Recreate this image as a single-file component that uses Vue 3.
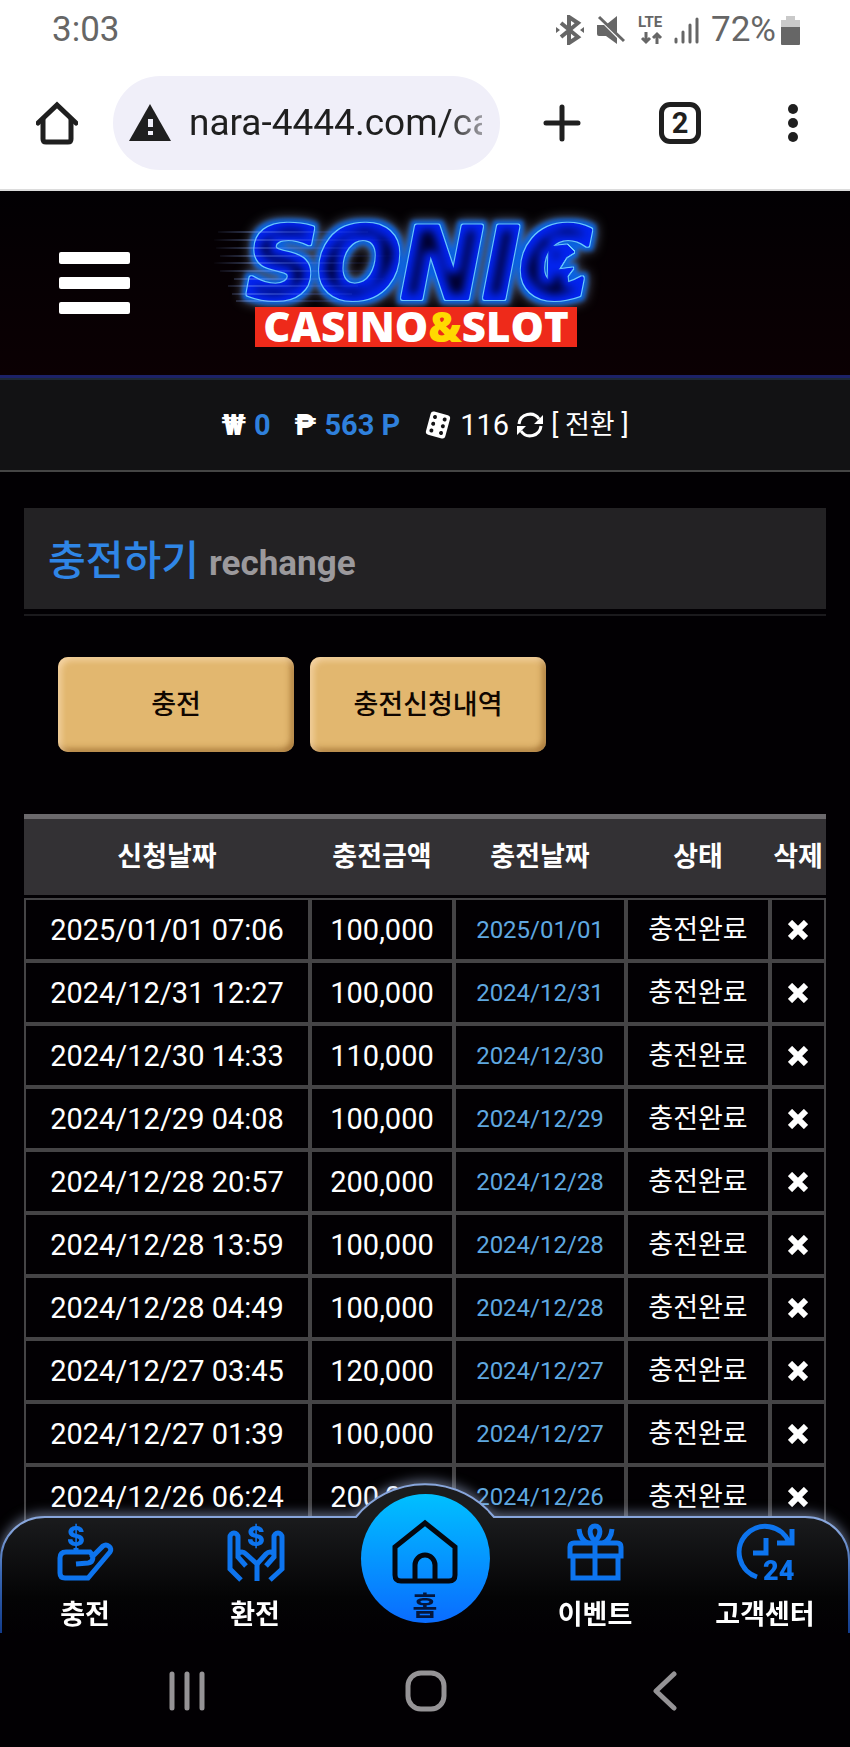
<script setup>
import { ref } from 'vue'

const address = ref('nara-4444.com/cash')
const activeTab = ref('history')

const tabs = [
  { id: 'charge', label: '충전' },
  { id: 'history', label: '충전신청내역' },
]

const rows = ref([
  { id: 1, requested: '2025/01/01 07:06', amount: 100000, charged: '2025/01/01' },
  { id: 2, requested: '2024/12/31 12:27', amount: 100000, charged: '2024/12/31' },
  { id: 3, requested: '2024/12/30 14:33', amount: 110000, charged: '2024/12/30' },
  { id: 4, requested: '2024/12/29 04:08', amount: 100000, charged: '2024/12/29' },
  { id: 5, requested: '2024/12/28 20:57', amount: 200000, charged: '2024/12/28' },
  { id: 6, requested: '2024/12/28 13:59', amount: 100000, charged: '2024/12/28' },
  { id: 7, requested: '2024/12/28 04:49', amount: 100000, charged: '2024/12/28' },
  { id: 8, requested: '2024/12/27 03:45', amount: 120000, charged: '2024/12/27' },
  { id: 9, requested: '2024/12/27 01:39', amount: 100000, charged: '2024/12/27' },
  { id: 10, requested: '2024/12/26 06:24', amount: 200000, charged: '2024/12/26' },
])

function formatAmount(n) {
  return n.toLocaleString('en-US')
}

function removeRow(id) {
  rows.value = rows.value.filter((r) => r.id !== id)
}
</script>

<template>
  <div class="screen">
    <div class="status-bar">
      <span>3:03</span>
      <div class="status-icons">
        <svg width="28" height="30" viewBox="0 0 28 30" fill="none" stroke="#666" stroke-width="4">
          <path d="M5 8l17 14-9 6V2l9 6L5 22" />
          <path d="M0 12l4 3-4 3zM28 12l-4 3 4 3z" fill="#666" stroke="none" />
        </svg>
        <svg class="mute" width="28" height="30" viewBox="0 0 28 30" fill="#666">
          <path d="M0 10h7l13 13v6L9 21H2q-2 0-2-2zM10 9l10-8v17z" />
          <path d="M2 2l25 24" stroke="#666" stroke-width="3" />
        </svg>
        <svg class="lte" width="28" height="30" viewBox="0 0 28 30">
          <text x="0" y="12" font-size="15" font-weight="700" fill="#666">LTE</text>
          <path d="M8 17v10M4 23l4 4 4-4M19 29V19M15 23l4-4 4 4" fill="none" stroke="#666" stroke-width="3" />
        </svg>
        <svg class="signal" width="26" height="30" viewBox="0 0 26 30" stroke="#666" stroke-width="3" stroke-linecap="round">
          <path d="M2 24v3M9 17v10M16 10v17M23 4v23" />
        </svg>
        <span class="battery-text">72%</span>
        <svg class="battery" width="19" height="29" viewBox="0 0 19 29">
          <path d="M5 0h9v4h5v8H0V4h5z" fill="#c9c9c9" />
          <path d="M0 11h19v17q0 1-1 1H1q-1 0-1-1z" fill="#666" />
        </svg>
      </div>
    </div>

    <div class="browser-bar">
      <button type="button" aria-label="홈페이지">
        <svg width="42" height="44" viewBox="0 0 42 44" fill="none" stroke="#1f1f1f" stroke-width="5">
          <path d="M2 22L21 4l19 18" stroke-linecap="round" />
          <path d="M7 18v20q0 3 3 3h22q3 0 3-3V18" />
        </svg>
      </button>
      <label class="address">
        <svg width="42" height="37" viewBox="0 0 42 37">
          <path d="M21 0l21 37H0z" fill="#1f1f1f" />
          <path d="M19 15h5v8h-5zM19 27h5v4h-5z" fill="#f0eff9" />
        </svg>
        <input v-model="address" type="text" aria-label="주소" />
      </label>
      <button class="new-tab" type="button" aria-label="새 탭">
        <svg width="38" height="38" viewBox="0 0 38 38" stroke="#1f1f1f" stroke-width="5" stroke-linecap="round">
          <path d="M19 3v32M3 19h32" />
        </svg>
      </button>
      <button class="tab-count" type="button">2</button>
      <button class="more" type="button" aria-label="메뉴 더보기">
        <svg width="10" height="38" viewBox="0 0 10 38" fill="#1f1f1f">
          <circle cx="5" cy="5" r="5" />
          <circle cx="5" cy="19" r="5" />
          <circle cx="5" cy="33" r="5" />
        </svg>
      </button>
    </div>

    <header class="site-header">
      <button class="hamburger" type="button" aria-label="메뉴">
        <span></span>
        <span></span>
        <span></span>
      </button>
      <svg class="logo" width="430" height="166" viewBox="0 0 430 166">
        <defs>
          <filter id="neon" x="-10%" y="-30%" width="120%" height="160%" color-interpolation-filters="sRGB">
            <feMorphology in="SourceAlpha" operator="dilate" radius="4" result="wide" />
            <feGaussianBlur in="wide" stdDeviation="6" result="haze" />
            <feFlood flood-color="#8296b8" flood-opacity="0.75" />
            <feComposite in2="haze" operator="in" result="hazeColor" />
            <feMorphology in="SourceAlpha" operator="dilate" radius="4" result="mid" />
            <feGaussianBlur in="mid" stdDeviation="2" result="midBlur" />
            <feFlood flood-color="#0a62e0" />
            <feComposite in2="midBlur" operator="in" result="halo" />
            <feMorphology in="SourceAlpha" operator="dilate" radius="1" result="edge" />
            <feFlood flood-color="#6ccbff" />
            <feComposite in2="edge" operator="in" result="edgeColor" />
            <feMorphology in="SourceAlpha" operator="erode" radius="6" result="thin" />
            <feGaussianBlur in="thin" stdDeviation="4" result="core" />
            <feFlood flood-color="#00002e" />
            <feComposite in2="core" operator="in" result="coreColor" />
            <feMerge>
              <feMergeNode in="hazeColor" />
              <feMergeNode in="halo" />
              <feMergeNode in="edgeColor" />
              <feMergeNode in="SourceGraphic" />
              <feMergeNode in="coreColor" />
            </feMerge>
          </filter>
          <linearGradient id="speed" gradientUnits="userSpaceOnUse" x1="12" y1="0" x2="200" y2="0">
            <stop offset="0" stop-color="#8fb0ff" stop-opacity="0" />
            <stop offset="0.2" stop-color="#8fb0ff" stop-opacity="0.6" />
            <stop offset="1" stop-color="#3c5cff" stop-opacity="0" />
          </linearGradient>
        </defs>
        <g filter="url(#neon)" fill="#0324f0" stroke="#0324f0" stroke-linejoin="round">
          <text class="brand" x="47" y="98" stroke-width="4">SONIC</text>
          <path d="M349 47l18-2 7 7-8 5-8 13 15-2-6 8 1 9-20 2z" />
        </g>
        <path
          d="M18 32h150M14 40h180M16 48h140M20 56h180M14 63h160M20 71h150M34 79h150M28 86h130M32 94h120M36 101h120"
          fill="none" stroke="url(#speed)"
        />
        <path d="M55 107h322v40H55z" fill="#ee2a1a" />
        <text class="brand-sub" x="216" y="142" text-anchor="middle">CASINO<tspan fill="#ffd900">&amp;</tspan>SLOT</text>
      </svg>
    </header>

    <div class="wallet">
      <b class="sign">₩</b>
      <b class="blue">0</b>
      <b class="sign point">₱</b>
      <b class="blue">563 P</b>
      <svg class="dice" width="28" height="28" viewBox="0 0 28 28">
        <g transform="rotate(15 14 14)">
          <rect x="4" y="2" width="20" height="24" rx="3" fill="#fff" />
          <g fill="#121214">
            <circle cx="9" cy="7" r="2" />
            <circle cx="9" cy="14" r="2" />
            <circle cx="9" cy="21" r="2" />
            <circle cx="19" cy="7" r="2" />
            <circle cx="19" cy="14" r="2" />
            <circle cx="19" cy="21" r="2" />
          </g>
        </g>
      </svg>
      <span>116</span>
      <svg class="refresh" width="26" height="26" viewBox="0 0 26 26">
        <path d="M2 12a11 11 0 0 1 20-5M24 14a11 11 0 0 1-20 5" fill="none" stroke="#fff" stroke-width="3" />
        <path d="M26 3v9h-9zM0 23v-9h9z" fill="#fff" />
      </svg>
      <a class="convert" href="#convert">[ 전환 ]</a>
    </div>

    <main class="content">
      <h1 class="page-title">충전하기 <small>rechange</small></h1>

      <div class="tabs">
        <button v-for="tab in tabs" :key="tab.id" type="button" @click="activeTab = tab.id">
          {{ tab.label }}
        </button>
      </div>

      <table class="history">
        <colgroup>
          <col />
          <col class="col-amount" />
          <col class="col-charged" />
          <col class="col-amount" />
          <col class="col-delete" />
        </colgroup>
        <thead>
          <tr>
            <th>신청날짜</th>
            <th>충전금액</th>
            <th>충전날짜</th>
            <th>상태</th>
            <th>삭제</th>
          </tr>
        </thead>
        <tbody>
          <tr v-for="row in rows" :key="row.id">
            <td>{{ row.requested }}</td>
            <td>{{ formatAmount(row.amount) }}</td>
            <td class="charged">{{ row.charged }}</td>
            <td class="state">충전완료</td>
            <td>
              <button class="delete" type="button" aria-label="삭제" @click="removeRow(row.id)">
                <svg width="20" height="20" viewBox="0 0 20 20" stroke="#fff" stroke-width="6">
                  <path d="M2 2l16 16M18 2L2 18" />
                </svg>
              </button>
            </td>
          </tr>
        </tbody>
      </table>
    </main>

    <div class="bottom">
      <nav class="site-nav">
        <svg class="nav-shape" viewBox="0 0 850 151" preserveAspectRatio="none">
          <defs>
            <linearGradient id="navFill" x1="0" y1="0" x2="0" y2="1">
              <stop offset="0.2" stop-color="#1b1c1e" />
              <stop offset="0.75" stop-color="#040405" />
              <stop offset="1" stop-color="#020003" />
            </linearGradient>
            <linearGradient id="navEdge" gradientUnits="userSpaceOnUse" x1="0" y1="0" x2="0" y2="151">
              <stop offset="0.3" stop-color="#88a6dc" />
              <stop offset="0.6" stop-color="#3a68b4" />
              <stop offset="1" stop-color="#123c8c" />
            </linearGradient>
          </defs>
          <path
            d="M1 153V78C1 54 20 35 45 35H356A89 89 0 0 1 494 35H805C830 35 849 54 849 78V153"
            fill="url(#navFill)" stroke="url(#navEdge)" stroke-width="2"
          />
        </svg>
        <a href="#charge">
          <svg class="nav-icon" width="57" height="57" viewBox="0 0 57 57">
            <path d="M19 40l12-1c6-1 6-7 2-11H9q-6 0-6 6v15q0 5 5 5h23L53 28c3-4-3-9-7-6L34 34M19 24v4" />
            <text x="19" y="22" text-anchor="middle">$</text>
          </svg>
          <span>충전</span>
        </a>
        <a href="#exchange">
          <svg class="nav-icon" width="57" height="57" viewBox="0 0 57 57">
            <path d="M14 56L3 45V13a4 4 0 0 1 8 0v20l8 9M12 29c3-2 5-1 7 1l11 10M30 57V40" />
            <path d="M43 56l12-11V13a4 4 0 0 0-8 0v20l-8 9M46 29c-3-2-5-1-7 1L30 40" />
            <text x="29" y="22" text-anchor="middle">$</text>
          </svg>
          <span>환전</span>
        </a>
        <a class="home" href="#home">
          <svg width="66" height="66" viewBox="0 0 66 66" fill="none" stroke="#04070f" stroke-width="5">
            <path d="M3 28L33 4l30 24v28q0 6-6 6H9q-6 0-6-6z" />
            <path d="M23 62V46a10 10 0 0 1 20 0v16" />
          </svg>
          <span>홈</span>
        </a>
        <a href="#event">
          <svg class="nav-icon" width="57" height="57" viewBox="0 0 57 57">
            <path d="M3 32V23q0-4 4-4h43q4 0 4 4v9zM6 32v22h45V32M28 19v35" />
            <path d="M28 17C21 11 22 2 28 2s7 9 0 15M12 5q1 11 9 14M45 5q-1 11-9 14" />
          </svg>
          <span>이벤트</span>
        </a>
        <a href="#support">
          <svg class="nav-icon" width="57" height="57" viewBox="0 0 57 57">
            <path d="M20 53A26 26 0 1 1 52 18M55 5v14H40M29 14v15H16" />
            <text class="hours" x="26" y="56">24</text>
          </svg>
          <span>고객센터</span>
        </a>
      </nav>

      <div class="system-nav">
        <button type="button" aria-label="최근 앱">
          <svg width="38" height="48" viewBox="0 0 38 48">
            <path d="M4 7v34M19 7v34M34 7v34" />
          </svg>
        </button>
        <button type="button" aria-label="홈 화면">
          <svg width="42" height="48" viewBox="0 0 42 48">
            <rect x="3" y="6" width="36" height="36" rx="13" />
          </svg>
        </button>
        <button type="button" aria-label="뒤로">
          <svg width="32" height="48" viewBox="0 0 32 48">
            <path d="M29 7L11 24l18 17" />
          </svg>
        </button>
      </div>
    </div>
  </div>
</template>

<style>
body {
  margin: 0;
  background: #020003;
}
</style>

<style scoped>
.screen {
  min-height: 100vh;
  background: #020003;
  color: #fff;
  font-family: Roboto, 'Noto Sans CJK KR', sans-serif;
  font-size: 29px;
  line-height: 32px;
}

button {
  padding: 0;
  border: 0;
  background: none;
  color: inherit;
  font: inherit;
  cursor: pointer;
}

button svg {
  display: block;
}

a {
  color: inherit;
  text-decoration: none;
}

.status-bar {
  display: flex;
  justify-content: space-between;
  height: 60px;
  padding: 0 50px 0 52px;
  align-items: center;
  background: #fff;
  color: #666;
  font-size: 35px;
}

.status-icons {
  display: flex;
  align-items: center;
}

.mute,
.lte {
  margin-left: 13px;
}

.lte {
  overflow: visible;
}

.signal {
  margin-left: 8px;
}

.battery-text {
  margin-left: 11px;
}

.battery {
  margin-left: 5px;
}

.browser-bar {
  display: flex;
  align-items: center;
  height: 125px;
  padding: 0 52px 4px 36px;
  background: #fff;
  border-bottom: 2px solid #dcdcdc;
  color: #1f1f1f;
}

.address {
  display: flex;
  flex: 1;
  min-width: 0;
  align-items: center;
  gap: 18px;
  height: 94px;
  margin-left: 35px;
  padding: 0 18px 0 16px;
  border-radius: 47px;
  background: #f0eff9;
}

.address svg {
  flex: none;
}

.address input {
  flex: 1;
  min-width: 0;
  padding: 0;
  border: 0;
  outline: 0;
  background: none;
  color: #1f1f1f;
  font: inherit;
  font-size: 37px;
  line-height: 48px;
  -webkit-mask-image: linear-gradient(90deg, #000 88%, rgba(0, 0, 0, 0.4));
  mask-image: linear-gradient(90deg, #000 88%, rgba(0, 0, 0, 0.4));
}

.new-tab {
  margin-left: 43px;
}

.tab-count {
  box-sizing: border-box;
  width: 42px;
  height: 42px;
  margin-left: 78px;
  border: 5px solid #1f1f1f;
  border-radius: 11px;
  font-weight: 700;
}

.more {
  margin-left: 87px;
}

.site-header {
  display: flex;
  align-items: center;
  height: 184px;
  padding-left: 59px;
  background: linear-gradient(#020003, #0b0003);
  border-bottom: 3px solid #1c2268;
}

.hamburger {
  display: flex;
  flex-direction: column;
  gap: 13px;
}

.hamburger span {
  width: 71px;
  height: 12px;
  border-radius: 2px;
  background: #fff;
}

.logo {
  margin-left: 70px;
}

.brand {
  font: italic 700 98px 'DejaVu Sans', sans-serif;
}

.brand-sub {
  fill: #fff;
  font: 800 42px 'Open Sans', sans-serif;
}

.wallet {
  display: flex;
  justify-content: center;
  align-items: center;
  height: 90px;
  background: #121214;
  border-top: 2px solid #1d2836;
  border-bottom: 2px solid #454545;
}

.sign {
  font-weight: 900;
}

.blue {
  margin-left: 8px;
  color: #2f80dc;
}

.point {
  margin-left: 24px;
}

.dice {
  margin-left: 24px;
  margin-right: 8px;
}

.refresh {
  margin: 0 8px;
}

.convert {
  font-size: 27px;
}

.content {
  padding: 36px 24px 0;
}

.page-title {
  height: 101px;
  margin: 0;
  padding: 0 24px;
  background: #232224;
  color: #2f86e6;
  font-size: 41px;
  font-weight: 500;
  line-height: 106px;
  box-shadow: 0 5px #020003, 0 7px #1b1a1d;
}

.page-title small {
  color: #9b999c;
  font-size: 35px;
  font-weight: 700;
}

.tabs {
  display: flex;
  gap: 16px;
  padding: 48px 34px 62px;
}

.tabs button {
  width: 236px;
  height: 95px;
  border-radius: 10px;
  background: #e2b76f;
  color: #100600;
  font-size: 27px;
  font-weight: 500;
  box-shadow: inset 3px 3px 6px rgba(255, 226, 190, 0.7), inset -3px -3px 6px rgba(140, 90, 30, 0.7);
}

.history {
  width: 100%;
  table-layout: fixed;
  border-collapse: separate;
  border-spacing: 0;
}

.col-amount {
  width: 144px;
}

.col-charged {
  width: 172px;
}

.col-delete {
  width: 56px;
}

th {
  box-sizing: border-box;
  height: 84px;
  padding: 0;
  border-top: 5px solid #6b696c;
  border-bottom: 3px solid #020003;
  background: #333134;
  font-size: 27px;
  font-weight: 700;
  white-space: nowrap;
}

td {
  box-sizing: border-box;
  height: 63px;
  padding: 0;
  border: 2px solid #454446;
  text-align: center;
  white-space: nowrap;
}

.charged {
  color: #5fa8e0;
  font-size: 24px;
}

.state {
  font-size: 27px;
}

.delete {
  display: block;
  margin: 0 auto;
}

/* stays on top of the list while it scrolls */
.bottom {
  position: fixed;
  right: 0;
  bottom: 0;
  left: 0;
}

.site-nav {
  position: relative;
  display: grid;
  grid-template-columns: repeat(5, 1fr);
  align-items: end;
  height: 147px;
  padding-bottom: 4px;
  font-size: 27px;
  font-weight: 700;
  line-height: 28px;
}

.nav-shape {
  position: absolute;
  top: 0;
  left: 0;
  width: 100%;
  height: 100%;
  overflow: visible;
  filter: drop-shadow(0 -3px 6px rgba(180, 200, 240, 0.5));
}

.site-nav a {
  position: relative;
  display: flex;
  flex-direction: column;
  align-items: center;
  gap: 20px;
}

.nav-icon {
  overflow: visible;
  fill: none;
  stroke: #0d74ee;
  stroke-width: 5;
}

.nav-icon text {
  fill: #0d74ee;
  stroke: none;
  font: 800 27px Inter, sans-serif;
}

.nav-icon .hours {
  font: 900 27px Roboto, sans-serif;
}

.site-nav .home {
  box-sizing: border-box;
  justify-self: center;
  width: 129px;
  height: 129px;
  margin-bottom: 6px;
  padding-top: 25px;
  gap: 8px;
  border-radius: 50%;
  background: linear-gradient(#00c0ff, #0a6cff);
  color: #04163c;
}

.system-nav {
  position: relative;
  display: flex;
  justify-content: space-between;
  align-items: center;
  height: 112px;
  padding: 2px 173px 0 168px;
  background: #020003;
}

.system-nav svg {
  fill: none;
  stroke: #959396;
  stroke-width: 5;
  stroke-linecap: round;
  stroke-linejoin: round;
}
</style>
